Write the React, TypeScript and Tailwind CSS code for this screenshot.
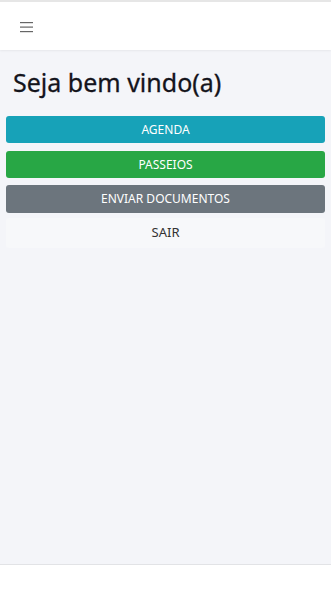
import React from "react";

export default function App() {
  return (
    <div className="flex h-[592px] w-[331px] flex-col bg-[#f4f5f9]" style={{ fontFamily: '"Noto Sans", "Open Sans", sans-serif' }}>
      <header className="flex h-[50px] shrink-0 items-center border-t-2 border-[#e6e6e6] bg-white px-5 shadow-[0_1px_2px_rgba(0,0,0,0.06)]">
        <svg width="14" height="12" viewBox="0 0 14 12" className="mt-[2px]">
          <rect x="0" y="1" width="13" height="1.2" fill="#666" />
          <rect x="0" y="5.5" width="13" height="1.2" fill="#666" />
          <rect x="0" y="10" width="13" height="1.2" fill="#666" />
        </svg>
      </header>
      <main className="flex flex-1 flex-col px-[6px]">
        <h1 className="mt-[16px] pl-[7px] text-[25px] leading-[32px] text-[#14141c] [-webkit-text-stroke:0.3px_#14141c]">Seja bem vindo(a)</h1>
        <div className="mt-[18px] flex flex-col text-[12px]">
          <button className="h-[27px] rounded-[3px] bg-[#17a2b8] text-white">AGENDA</button>
          <button className="mt-[8px] h-[27px] rounded-[3px] bg-[#28a745] text-white">PASSEIOS</button>
          <button className="mt-[7px] h-[28px] rounded-[3px] bg-[#6c757d] text-white">ENVIAR DOCUMENTOS</button>
          <button className="mt-[5px] h-[30px] rounded-[3px] bg-[#f7f8fa] text-[13px] text-[#333]">SAIR</button>
        </div>
      </main>
      <footer className="h-[28px] shrink-0 border-t border-[#e2e3e6] bg-white" />
    </div>
  );
}
